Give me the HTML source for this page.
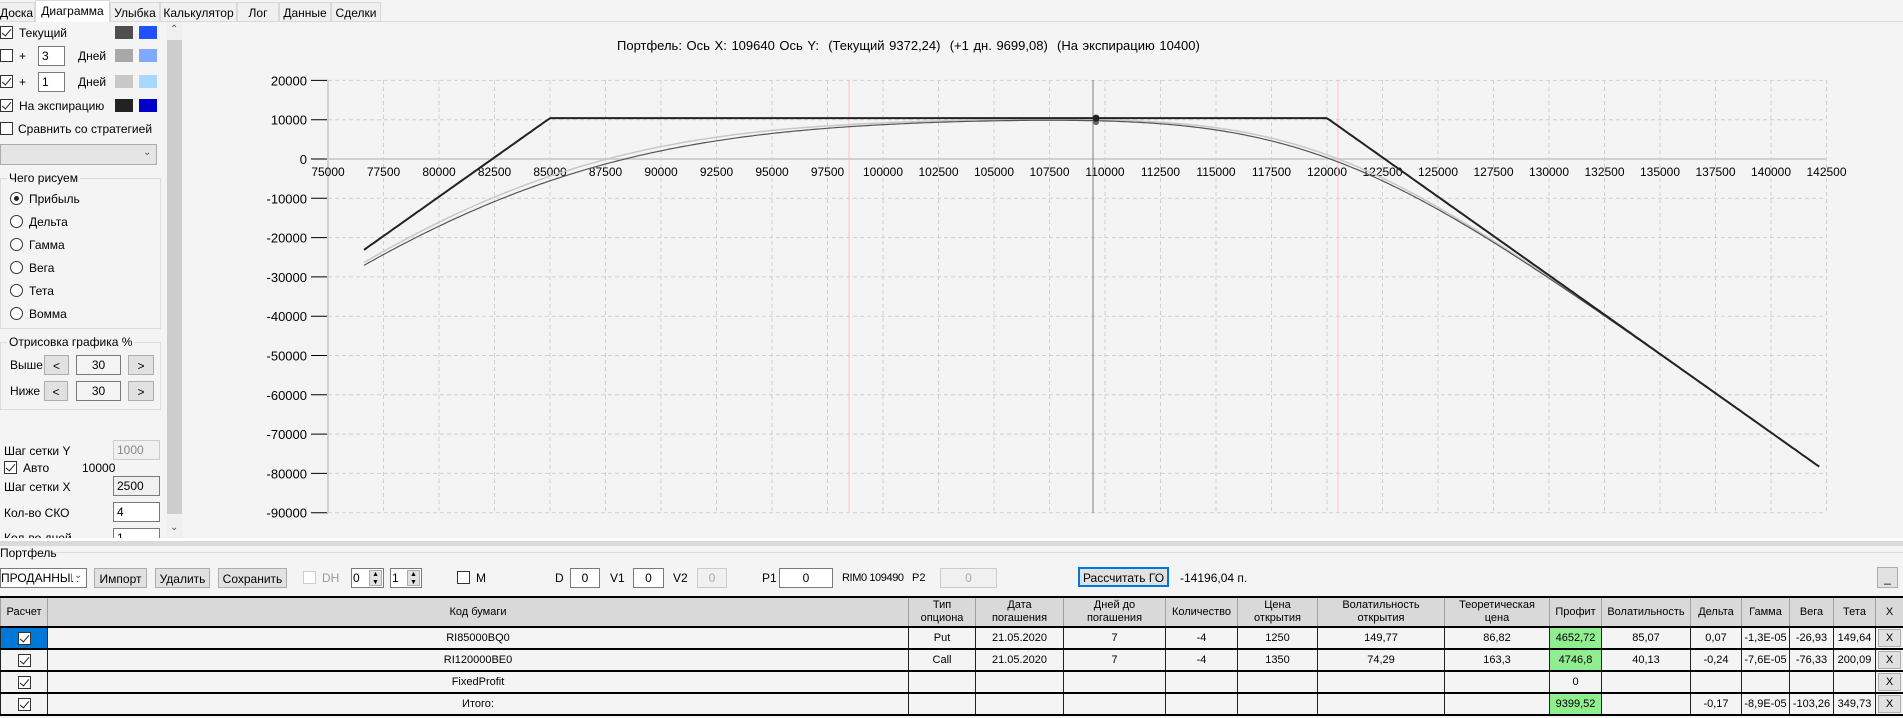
<!DOCTYPE html>
<html><head><meta charset="utf-8"><style>
*{box-sizing:border-box;margin:0;padding:0}
body{width:1903px;height:718px;overflow:hidden;background:#f4f4f4;font-family:"Liberation Sans",sans-serif;font-size:12px;color:#000;position:relative}
.a{position:absolute;white-space:nowrap}
.tab{position:absolute;top:2px;height:19px;border:1px solid #d9d9d9;border-bottom:none;background:#f0f0f0;padding:3px 0 0 0;text-align:center}
.cb{position:absolute;width:13px;height:13px;border:1px solid #333;background:#fff}
.cb.c::after{content:"";position:absolute;left:3px;top:0px;width:4px;height:8px;border:solid #222;border-width:0 1.3px 1.3px 0;transform:rotate(40deg)}
.tb{position:absolute;height:20px;border:1px solid #7a7a7a;background:#fff;padding:2px 3px}
.sw{position:absolute;width:18px;height:13px}
.rd{position:absolute;width:13px;height:13px;border:1px solid #333;border-radius:50%;background:#fff}
.btn{position:absolute;height:20px;border:1px solid #adadad;background:#e1e1e1;text-align:center;padding-top:3px}
.grp{position:absolute;border:1px solid #dcdcdc}
.gl{position:absolute;background:#f4f4f4;padding:0 2px;top:-8px;left:6px}
table{position:absolute;left:0;top:596px;width:1903px;border-collapse:collapse;table-layout:fixed;font-size:11px}
td,th{border:1px solid #000;text-align:center;font-weight:normal;overflow:hidden;white-space:nowrap;padding:0}
th{background:#d9d9d9;height:30px;border-color:#fff #a0a0a0;line-height:13px;border-top:2px solid #000}
td{height:22px;background:#f4f4f4;border-width:2px 1px 1px 1px;border-color:#000 #222}
td.g{background:#90ee90}
td.s{background:#0078d7}
.ic{display:inline-block;width:13px;height:13px;border:1px solid #333;background:#fff;position:relative;vertical-align:middle}
.ic::after{content:"";position:absolute;left:3px;top:0;width:4px;height:8px;border:solid #222;border-width:0 1.3px 1.3px 0;transform:rotate(40deg)}
.xb{display:block;margin:1px 2px;height:18px;border:1px solid #adadad;background:#e1e1e1;line-height:17px}
</style></head><body>
<div style="position:absolute;left:0;top:21px;width:1903px;height:1px;background:#d9d9d9"></div>
<div class="tab" style="left:-2px;width:37px">Доска</div>
<div class="tab" style="left:35px;width:75px;top:0;height:22px;background:#fff">Диаграмма</div>
<div class="tab" style="left:110px;width:50px">Улыбка</div>
<div class="tab" style="left:160px;width:77px">Калькулятор</div>
<div class="tab" style="left:237px;width:42px">Лог</div>
<div class="tab" style="left:279px;width:52px">Данные</div>
<div class="tab" style="left:331px;width:50px">Сделки</div>

<div class="cb c" style="left:0;top:26px"></div><div class="a" style="left:19px;top:26px">Текущий</div>
<div class="sw" style="left:115px;top:26px;background:#4e4e4e"></div><div class="sw" style="left:139px;top:26px;background:#2050ff"></div>
<div class="cb" style="left:0;top:49px"></div><div class="a" style="left:19px;top:49px">+</div>
<div class="tb" style="left:38px;top:46px;width:27px">3</div><div class="a" style="left:78px;top:49px">Дней</div>
<div class="sw" style="left:115px;top:49px;background:#a8a8a8"></div><div class="sw" style="left:139px;top:49px;background:#80a8ff"></div>
<div class="cb c" style="left:0;top:75px"></div><div class="a" style="left:19px;top:75px">+</div>
<div class="tb" style="left:38px;top:72px;width:27px">1</div><div class="a" style="left:78px;top:75px">Дней</div>
<div class="sw" style="left:115px;top:75px;background:#c8c8c8"></div><div class="sw" style="left:139px;top:75px;background:#a8d8ff"></div>
<div class="cb c" style="left:0;top:99px"></div><div class="a" style="left:19px;top:99px">На экспирацию</div>
<div class="sw" style="left:115px;top:99px;background:#222"></div><div class="sw" style="left:139px;top:99px;background:#0000c8"></div>
<div class="cb" style="left:0;top:122px"></div><div class="a" style="left:18px;top:122px">Сравнить со стратегией</div>
<div style="position:absolute;left:0;top:144px;width:157px;height:21px;border:1px solid #adadad;background:#e5e5e5"></div>
<div class="a" style="left:143px;top:147px;font-size:10px;color:#555">&#8964;</div>
<div class="grp" style="left:0;top:178px;width:161px;height:151px"><div class="gl">Чего рисуем</div></div>
<div class="rd" style="left:10px;top:192px"><div style="position:absolute;left:3px;top:3px;width:5px;height:5px;border-radius:50%;background:#222"></div></div><div class="a" style="left:29px;top:192px">Прибыль</div>
<div class="rd" style="left:10px;top:215px"></div><div class="a" style="left:29px;top:215px">Дельта</div>
<div class="rd" style="left:10px;top:238px"></div><div class="a" style="left:29px;top:238px">Гамма</div>
<div class="rd" style="left:10px;top:261px"></div><div class="a" style="left:29px;top:261px">Вега</div>
<div class="rd" style="left:10px;top:284px"></div><div class="a" style="left:29px;top:284px">Тета</div>
<div class="rd" style="left:10px;top:307px"></div><div class="a" style="left:29px;top:307px">Вомма</div>
<div class="grp" style="left:0;top:342px;width:161px;height:68px"><div class="gl">Отрисовка графика %</div></div>
<div class="a" style="left:10px;top:358px">Выше</div>
<div class="btn" style="left:44px;top:355px;width:25px">&lt;</div>
<div class="tb" style="left:76px;top:355px;width:45px;text-align:center;background:#f4f4f4">30</div>
<div class="btn" style="left:128px;top:355px;width:26px">&gt;</div>
<div class="a" style="left:10px;top:384px">Ниже</div>
<div class="btn" style="left:44px;top:381px;width:24px">&lt;</div>
<div class="tb" style="left:76px;top:381px;width:45px;text-align:center;background:#f4f4f4">30</div>
<div class="btn" style="left:128px;top:381px;width:26px">&gt;</div>
<div class="a" style="left:4px;top:444px">Шаг сетки Y</div>
<div class="tb" style="left:113px;top:440px;width:47px;background:#f0f0f0;color:#888;border-color:#ccc">1000</div>
<div class="cb c" style="left:4px;top:461px"></div><div class="a" style="left:23px;top:461px">Авто</div><div class="a" style="left:82px;top:461px">10000</div>
<div class="a" style="left:4px;top:480px">Шаг сетки X</div>
<div class="tb" style="left:113px;top:476px;width:47px;background:#f0f0f0">2500</div>
<div class="a" style="left:4px;top:506px">Кол-во СКО</div>
<div class="tb" style="left:113px;top:502px;width:47px">4</div>
<div style="position:absolute;left:0;top:528px;width:165px;height:10px;overflow:hidden"><div class="a" style="left:4px;top:3px">Кол-во дней</div><div class="tb" style="left:113px;top:0;width:47px">1</div></div>
<div style="position:absolute;left:167px;top:22px;width:16px;height:516px;background:#f0f0f0"></div>
<div style="position:absolute;left:167px;top:40px;width:15px;height:474px;background:#cdcdcd"></div>
<div class="a" style="left:170px;top:24px;font-size:10px;color:#555">&#8963;</div>
<div class="a" style="left:170px;top:522px;font-size:10px;color:#555">&#8964;</div>

<div class="a" style="left:617px;top:38px;font-size:13px;word-spacing:1px">Портфель: Ось X: 109640 Ось Y:&nbsp; (Текущий 9372,24)&nbsp; (+1 дн. 9699,08)&nbsp; (На экспирацию 10400)</div>
<svg id="ch" style="position:absolute;left:0;top:0" width="1903" height="540" font-family="Liberation Sans, sans-serif" font-size="12"></svg>

<div style="position:absolute;left:0;top:538px;width:1903px;height:3px;background:#fff"></div>
<div style="position:absolute;left:0;top:541px;width:1903px;height:5px;background:#dadada"></div>
<div style="position:absolute;left:50px;top:552px;width:1853px;height:1px;background:#dcdcdc"></div>
<div class="a" style="left:0;top:546px">Портфель</div>

<div style="position:absolute;left:0;top:568px;width:87px;height:20px;border:1px solid #7a7a7a;background:#fff;padding:2px 0 0 0;overflow:hidden">ПРОДАННЫЙ</div>
<div class="a" style="left:72px;top:570px;background:#fff;color:#555;font-size:10px;padding:0 2px">&#8964;</div>
<div class="btn" style="left:94px;top:568px;width:53px">Импорт</div>
<div class="btn" style="left:155px;top:568px;width:55px">Удалить</div>
<div class="btn" style="left:218px;top:568px;width:69px">Сохранить</div>
<div class="cb" style="left:303px;top:571px;border-color:#ccc"></div><div class="a" style="left:322px;top:571px;color:#999">DH</div>
<div class="tb" style="left:351px;top:568px;width:33px;padding:2px 1px">0</div><div class="btn" style="left:369px;top:570px;width:13px;height:16px;font-size:7px;padding:0;line-height:8px">▲<br>▼</div>
<div class="tb" style="left:390px;top:568px;width:32px;padding:2px 1px">1</div><div class="btn" style="left:407px;top:570px;width:13px;height:16px;font-size:7px;padding:0;line-height:8px">▲<br>▼</div>
<div class="cb" style="left:457px;top:571px"></div><div class="a" style="left:476px;top:571px">M</div>
<div class="a" style="left:555px;top:571px">D</div><div class="tb" style="left:570px;top:568px;width:30px;text-align:center">0</div>
<div class="a" style="left:610px;top:571px">V1</div><div class="tb" style="left:633px;top:568px;width:31px;text-align:center">0</div>
<div class="a" style="left:673px;top:571px">V2</div><div class="tb" style="left:697px;top:568px;width:30px;text-align:center;background:#f0f0f0;color:#aaa;border-color:#ccc">0</div>
<div class="a" style="left:762px;top:571px">P1</div><div class="tb" style="left:779px;top:568px;width:54px;text-align:center">0</div>
<div class="a" style="left:842px;top:572px;font-size:11px;letter-spacing:-0.4px">RIM0 109490</div><div class="a" style="left:912px;top:572px;font-size:11px">P2</div>
<div class="tb" style="left:940px;top:568px;width:57px;text-align:center;background:#f0f0f0;color:#aaa;border-color:#ccc">0</div>
<div class="btn" style="left:1078px;top:567px;width:91px;border:2px solid #0078d7;padding-top:2px">Рассчитать ГО</div>
<div class="a" style="left:1180px;top:571px">-14196,04 п.</div>
<div class="btn" style="left:1877px;top:567px;width:21px;height:21px">_</div>

<table>
<colgroup><col style="width:47px"><col style="width:861px"><col style="width:67px"><col style="width:88px"><col style="width:102px"><col style="width:72px"><col style="width:80px"><col style="width:127px"><col style="width:105px"><col style="width:52px"><col style="width:89px"><col style="width:51px"><col style="width:48px"><col style="width:44px"><col style="width:42px"><col style="width:28px"></colgroup>
<tr><th>Расчет</th><th>Код бумаги</th><th>Тип<br>опциона</th><th>Дата<br>погашения</th><th>Дней до<br>погашения</th><th>Количество</th><th>Цена<br>открытия</th><th>Волатильность<br>открытия</th><th>Теоретическая<br>цена</th><th>Профит</th><th>Волатильность</th><th>Дельта</th><th>Гамма</th><th>Вега</th><th>Тета</th><th>X</th></tr>
<tr><td class="s"><span class="ic"></span></td><td>RI85000BQ0</td><td>Put</td><td>21.05.2020</td><td>7</td><td>-4</td><td>1250</td><td>149,77</td><td>86,82</td><td class="g">4652,72</td><td>85,07</td><td>0,07</td><td>-1,3E-05</td><td>-26,93</td><td>149,64</td><td><span class="xb">X</span></td></tr>
<tr><td><span class="ic"></span></td><td>RI120000BE0</td><td>Call</td><td>21.05.2020</td><td>7</td><td>-4</td><td>1350</td><td>74,29</td><td>163,3</td><td class="g">4746,8</td><td>40,13</td><td>-0,24</td><td>-7,6E-05</td><td>-76,33</td><td>200,09</td><td><span class="xb">X</span></td></tr>
<tr><td><span class="ic"></span></td><td>FixedProfit</td><td></td><td></td><td></td><td></td><td></td><td></td><td></td><td>0</td><td></td><td></td><td></td><td></td><td></td><td><span class="xb">X</span></td></tr>
<tr><td style="border-bottom:2px solid #000"><span class="ic"></span></td><td style="border-bottom:2px solid #000">Итого:</td><td style="border-bottom:2px solid #000"></td><td style="border-bottom:2px solid #000"></td><td style="border-bottom:2px solid #000"></td><td style="border-bottom:2px solid #000"></td><td style="border-bottom:2px solid #000"></td><td style="border-bottom:2px solid #000"></td><td style="border-bottom:2px solid #000"></td><td class="g" style="border-bottom:2px solid #000">9399,52</td><td style="border-bottom:2px solid #000"></td><td style="border-bottom:2px solid #000">-0,17</td><td style="border-bottom:2px solid #000">-8,9E-05</td><td style="border-bottom:2px solid #000">-103,26</td><td style="border-bottom:2px solid #000">349,73</td><td style="border-bottom:2px solid #000"><span class="xb">X</span></td></tr>
</table>

<script>
(function(){
var s=document.getElementById('ch'),h='';
function X(v){return 328+(v-75000)/2500*55.5}
function Y(v){return 159-v/10000*39.3}
for(var i=0;i<=27;i++){var x=X(75000+i*2500);h+='<line x1="'+x+'" y1="80" x2="'+x+'" y2="513" stroke="#cfcfcf" stroke-dasharray="4,3"/>';}
for(var j=-9;j<=2;j++){var y=Y(j*10000);h+='<line x1="328" y1="'+y+'" x2="1826" y2="'+y+'" stroke="#cfcfcf" stroke-dasharray="4,3"/>';
h+='<line x1="311" y1="'+y+'" x2="328" y2="'+y+'" stroke="#000"/>';
h+='<text x="307" y="'+(y+5)+'" text-anchor="end" font-size="13">'+(j*10000)+'</text>';}
h+='<line x1="328" y1="80" x2="328" y2="513" stroke="#d0d0d0" stroke-width="2"/>';
h+='<line x1="328" y1="159" x2="1826" y2="159" stroke="#d0d0d0" stroke-width="2"/>';
for(var i=0;i<=27;i++){var v=75000+i*2500;h+='<text x="'+X(v)+'" y="176" text-anchor="middle">'+v+'</text>';}
h+='<line x1="849" y1="80" x2="849" y2="513" stroke="#ffc0c8"/>';
h+='<line x1="1338" y1="80" x2="1338" y2="513" stroke="#ffc0c8"/>';
h+='<line x1="1093" y1="80" x2="1093" y2="513" stroke="#7a808a"/>';
function N(x){var t=1/(1+0.2316419*Math.abs(x)),d=0.3989423*Math.exp(-x*x/2),p=d*t*(0.3193815+t*(-0.3565638+t*(1.781478+t*(-1.821256+t*1.330274))));return x>0?1-p:p}
function put(S,K,sg,T){var st=sg*Math.sqrt(T),d1=(Math.log(S/K)+0.5*st*st)/st,d2=d1-st;return K*N(-d2)-S*N(-d1)}
function call(S,K,sg,T){var st=sg*Math.sqrt(T),d1=(Math.log(S/K)+0.5*st*st)/st,d2=d1-st;return S*N(d1)-K*N(d2)}
function cur(S,T){return 10400-4*(put(S,85000,0.85,T)+call(S,120000,0.38,T))}
function path(f,col,w){var p='';for(var v=76620;v<=142300;v+=150){p+=(p?'L':'M')+X(v).toFixed(1)+','+Y(f(v)).toFixed(1);}
h+='<path d="'+p+'" fill="none" stroke="'+col+'" stroke-width="'+w+'"/>';}
path(function(v){return cur(v,6/365)},'#c8c8c8',1.5);
path(function(v){return cur(v,7/365)},'#555',1.2);
path(function(v){return 10400-4*Math.max(0,85000-v)-4*Math.max(0,v-120000)},'#222',2);
h+='<circle cx="1096" cy="'+Y(9372)+'" r="3" fill="#666"/><circle cx="1096" cy="'+Y(10400)+'" r="3.5" fill="#222"/>';
s.innerHTML=h;
})();
</script>
</body></html>
